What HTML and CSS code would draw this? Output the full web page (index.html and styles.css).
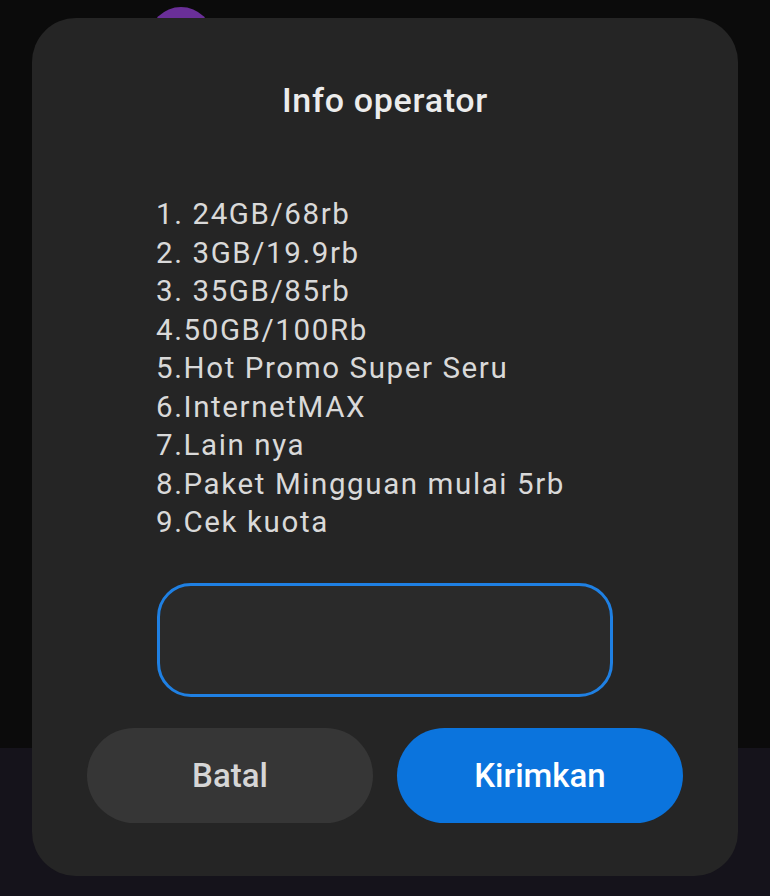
FILE: index.html
```html
<!DOCTYPE html>
<html lang="id">
<head>
<meta charset="utf-8">
<title>Info operator</title>
<link rel="stylesheet" href="styles.css">
</head>
<body>
<div class="screen">
  <div class="avatar"></div>
  <div class="dialog">
    <h1 class="title">Info operator</h1>
    <div class="message">
      <div>1. 24GB/68rb</div>
      <div>2. 3GB/19.9rb</div>
      <div>3. 35GB/85rb</div>
      <div>4.50GB/100Rb</div>
      <div>5.Hot Promo Super Seru</div>
      <div>6.InternetMAX</div>
      <div>7.Lain nya</div>
      <div>8.Paket Mingguan mulai 5rb</div>
      <div>9.Cek kuota</div>
    </div>
    <div class="input"></div>
    <div class="actions">
      <button class="btn btn-cancel">Batal</button>
      <button class="btn btn-send">Kirimkan</button>
    </div>
  </div>
</div>
</body>
</html>
```

FILE: styles.css
```css
* { box-sizing: border-box; }
html, body {
  margin: 0;
  padding: 0;
}
body {
  width: 770px;
  height: 896px;
  overflow: hidden;
  background: linear-gradient(to bottom, #0b0b0b 0, #0b0b0b 748px, #15131b 748px, #15131b 100%);
  font-family: Roboto, "Noto Sans", "Liberation Sans", sans-serif;
}
.screen {
  position: relative;
  width: 770px;
  height: 896px;
  padding: 18px 32px 20px 32px;
}
.avatar {
  position: absolute;
  left: 149px;
  top: 7px;
  width: 64px;
  height: 64px;
  border-radius: 50%;
  background: #6a2f98;
}
.dialog {
  position: relative;
  width: 706px;
  height: 858px;
  border-radius: 44px;
  background: #252525;
  display: flex;
  flex-direction: column;
  align-items: center;
  padding-top: 62px;
}
.title {
  margin: 0;
  font-size: 34px;
  line-height: 40px;
  font-weight: 500;
  color: #ececec;
  letter-spacing: 0.7px;
}
.message {
  align-self: stretch;
  margin-top: 75px;
  padding-left: 124px;
  font-size: 29.5px;
  line-height: 38.5px;
  letter-spacing: 1.6px;
  color: #d9d9d9;
  font-weight: 400;
}
.input {
  margin-top: 41px;
  width: 456px;
  height: 114px;
  border: 3px solid #1f80e3;
  border-radius: 34px;
  background: #2a2a2a;
}
.actions {
  margin-top: 31px;
  display: flex;
  gap: 24px;
}
.btn {
  border: none;
  width: 286px;
  height: 95px;
  border-radius: 48px;
  font-family: Roboto, "Noto Sans", "Liberation Sans", sans-serif;
  font-size: 33px;
  font-weight: 500;
  padding: 0;
}
.btn-cancel {
  background: #363636;
  color: #d6d6d6;
}
.btn-send {
  background: #0b74dd;
  color: #ffffff;
}
```
